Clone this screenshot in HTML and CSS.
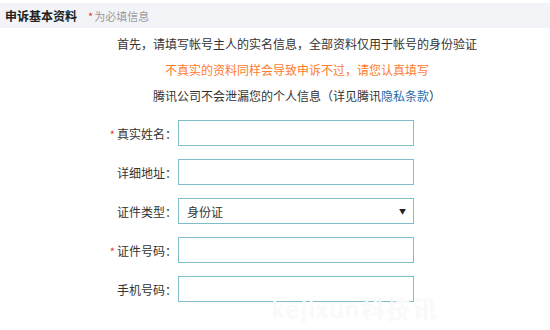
FILE: index.html
```html
<!DOCTYPE html>
<html lang="zh-CN">
<head>
    <meta charset="UTF-8">
    <title>申诉基本资料</title>
    <link rel="stylesheet" href="styles.css">
</head>
<body>
    <div class="section-head">
        <span class="section-title">申诉基本资料</span>
        <span class="section-note"><em>*</em>为必填信息</span>
    </div>

    <div class="intro">
        <p>首先，请填写帐号主人的实名信息，全部资料仅用于帐号的身份验证</p>
        <p class="warn">不真实的资料同样会导致申诉不过，请您认真填写</p>
        <p>腾讯公司不会泄漏您的个人信息（详见腾讯<a href="#">隐私条款</a>）</p>
    </div>

    <form class="info-form">
        <div class="form-row">
            <label class="form-label"><em>*</em>真实姓名：</label>
            <input class="form-input" type="text">
        </div>
        <div class="form-row">
            <label class="form-label">详细地址：</label>
            <input class="form-input" type="text">
        </div>
        <div class="form-row">
            <label class="form-label">证件类型：</label>
            <div class="select-wrap">
                <select class="form-input form-select">
                    <option>身份证</option>
                    <option>护照</option>
                </select>
                <span class="select-arrow">▼</span>
            </div>
        </div>
        <div class="form-row">
            <label class="form-label"><em>*</em>证件号码：</label>
            <input class="form-input" type="text">
        </div>
        <div class="form-row">
            <label class="form-label">手机号码：</label>
            <input class="form-input" type="text">
        </div>
    </form>

    <div class="watermark">kejixun科技讯</div>
</body>
</html>
```

FILE: styles.css
```css
body {
    margin: 0;
    font-family: 'Noto Sans CJK SC', 'Liberation Sans', sans-serif;
    font-size: 12px;
    color: #333;
    background-color: #fff;
    width: 550px;
    height: 330px;
    overflow: hidden;
    position: relative;
}
em {
    font-style: normal;
    color: #e4393c;
}
.section-head {
    margin-top: 3px;
    height: 25px;
    background-color: #f2f4f7;
    display: flex;
    align-items: center;
    padding-left: 5px;
}
.section-title {
    font-size: 12px;
    font-weight: bold;
    color: #222;
}
.section-note {
    font-size: 11px;
    color: #999;
    margin-left: 11px;
}
.section-note em {
    margin-right: 1px;
}
.intro {
    margin-top: 3px;
    padding-left: 44px;
    text-align: center;
}
.intro p {
    margin: 0;
    height: 26px;
    line-height: 26px;
}
.intro .warn {
    color: #ff7b2e;
}
.intro a {
    color: #2a6aab;
    text-decoration: none;
}
.info-form {
    margin-top: 11px;
    display: flex;
    flex-direction: column;
    gap: 13px;
}
.form-row {
    display: flex;
    align-items: center;
    height: 26px;
}
.form-label {
    width: 177px;
    text-align: right;
    color: #333;
}
.form-label em {
    margin-right: 2px;
    font-size: 11px;
}
.form-input {
    box-sizing: border-box;
    width: 236px;
    height: 26px;
    margin: 0 0 0 1px;
    border: 1px solid #7fbec8;
    padding: 0 8px;
    font-family: inherit;
    font-size: 12px;
    color: #333;
    background-color: #fff;
    outline: none;
}
.select-wrap {
    position: relative;
}
.form-select {
    appearance: none;
    -webkit-appearance: none;
    border-radius: 0;
}
.select-arrow {
    position: absolute;
    right: 8px;
    top: 8px;
    font-size: 7px;
    line-height: 10px;
    color: #222;
    pointer-events: none;
}
.watermark {
    position: absolute;
    left: 272px;
    top: 296px;
    font-family: 'Liberation Sans', 'Noto Sans CJK SC', sans-serif;
    font-size: 24px;
    line-height: 28px;
    color: #fbfbfb;
    text-shadow: 0 0 1px #ededed;
    letter-spacing: 2px;
}
```
